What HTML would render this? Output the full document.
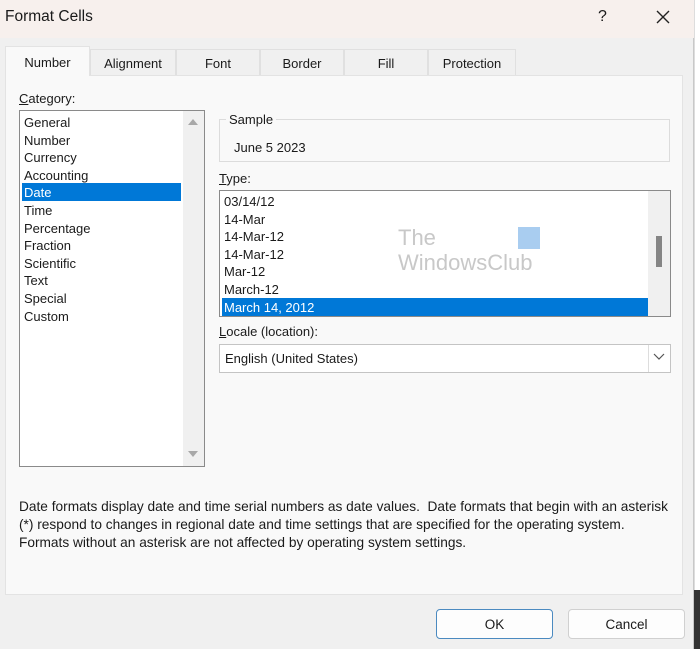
<!DOCTYPE html>
<html><head><style>
*{margin:0;padding:0;box-sizing:border-box}
body{width:700px;height:649px;overflow:hidden;background:#fff;font-family:"Liberation Sans",sans-serif;font-size:13px;color:#1a1a1a;position:relative}
.a{position:absolute}
.dlg{left:0;top:0;width:694px;height:649px;background:#f0f0f0;border-right:1px solid #c8c8c8}
.title{left:0;top:0;width:694px;height:38px;background:#f7f0ed}
.tab{top:49px;height:26px;background:#f0f0f0;border:1px solid #e0e0e0;border-bottom:none;text-align:center;line-height:27px;font-size:13px}
.panel{left:5px;top:75px;width:678px;height:520px;background:#f9f9f9;border:1px solid #e3e3e3}
.list{background:#fff;border:1px solid #8a8a8a}
.it{position:absolute;left:4px;height:17.6px;line-height:17.6px;font-size:13px}
.btn{top:609px;width:117px;height:30px;background:#fdfdfd;border:1px solid #d0d0d0;border-radius:4px;text-align:center;line-height:29px;font-size:13.5px}
</style></head><body>
<div class="a" style="left:694px;top:0;width:6px;height:649px;background:#fff;border-left:1px solid #ddd"></div>
<div class="a" style="left:694px;top:590px;width:6px;height:59px;background:#333"></div>
<div class="a dlg"></div>
<div class="a title"></div>
<div class="a" style="left:5px;top:8px;font-size:15.5px">Format Cells</div>
<div class="a" style="left:598px;top:8px;font-size:16px">?</div>
<svg class="a" style="left:656px;top:10px" width="14" height="14"><path d="M1 1L13 13M13 1L1 13" stroke="#222" stroke-width="1.4"/></svg>
<div class="a panel"></div>
<div class="a tab" style="left:5px;top:46px;width:85px;height:30px;background:#f9f9f9;border-color:#e3e3e3;line-height:31px">Number</div>
<div class="a tab" style="left:90px;width:86px">Alignment</div>
<div class="a tab" style="left:176px;width:84px">Font</div>
<div class="a tab" style="left:260px;width:84px">Border</div>
<div class="a tab" style="left:344px;width:84px">Fill</div>
<div class="a tab" style="left:428px;width:88px">Protection</div>
<div class="a" style="left:19px;top:91px"><u>C</u>ategory:</div>
<div class="a list" style="left:19px;top:110px;width:186px;height:357px">
<div class="it" style="top:3px">General</div>
<div class="it" style="top:20.6px">Number</div>
<div class="it" style="top:38.2px">Currency</div>
<div class="it" style="top:55.8px">Accounting</div>
<div class="a" style="left:2px;top:72px;width:159px;height:18px;background:#0078d7"></div>
<div class="it" style="top:73.4px;color:#fff">Date</div>
<div class="it" style="top:91px">Time</div>
<div class="it" style="top:108.6px">Percentage</div>
<div class="it" style="top:126.2px">Fraction</div>
<div class="it" style="top:143.8px">Scientific</div>
<div class="it" style="top:161.4px">Text</div>
<div class="it" style="top:179px">Special</div>
<div class="it" style="top:196.6px">Custom</div>
<div class="a" style="left:163px;top:0;width:21px;height:355px;background:#f0f0f0"></div>
<svg class="a" style="left:167px;top:6px" width="12" height="10"><path d="M1 8L6 2L11 8Z" fill="#a8a8a8"/></svg>
<svg class="a" style="left:167px;top:338px" width="12" height="10"><path d="M1 2L6 8L11 2Z" fill="#a8a8a8"/></svg>
</div>
<div class="a" style="left:219px;top:119px;width:451px;height:43px;border:1px solid #dcdcdc"></div>
<div class="a" style="left:226px;top:112px;background:#f9f9f9;padding:0 3px">Sample</div>
<div class="a" style="left:234px;top:140px">June 5 2023</div>
<div class="a" style="left:219px;top:171px"><u>T</u>ype:</div>
<div class="a list" style="left:219px;top:190px;width:452px;height:127px">
<div class="it" style="top:2px">03/14/12</div>
<div class="it" style="top:19.6px">14-Mar</div>
<div class="it" style="top:37.2px">14-Mar-12</div>
<div class="it" style="top:54.8px">14-Mar-12</div>
<div class="it" style="top:72.4px">Mar-12</div>
<div class="it" style="top:90px">March-12</div>
<div class="a" style="left:2px;top:107px;width:426px;height:18px;background:#0078d7"></div>
<div class="it" style="top:108px;color:#fff">March 14, 2012</div>
<div class="a" style="left:428px;top:0;width:22px;height:125px;background:#f0f0f0"></div>
<div class="a" style="left:436px;top:45px;width:6px;height:31px;background:#858585"></div>
<div class="a" style="left:178px;top:34px;color:#c8c8c8;font-size:22px;line-height:25px">The<br>WindowsClub</div>
<div class="a" style="left:298px;top:36px;width:22px;height:22px;background:#a9cdf0"></div>
</div>
<div class="a" style="left:219px;top:324px"><u>L</u>ocale (location):</div>
<div class="a" style="left:219px;top:344px;width:452px;height:29px;background:#fff;border:1px solid #c4c4c4"></div>
<div class="a" style="left:225px;top:351px">English (United States)</div>
<div class="a" style="left:648px;top:345px;width:22px;height:27px;border-left:1px solid #ddd"></div>
<svg class="a" style="left:653px;top:353px" width="12" height="8"><path d="M1 1L6 6L11 1" stroke="#555" fill="none" stroke-width="1.2"/></svg>
<div class="a" style="left:19px;top:498px;line-height:18px;font-size:13.7px;width:680px;white-space:nowrap">Date formats display date and time serial numbers as date values.&nbsp; Date formats that begin with an asterisk<br>(*) respond to changes in regional date and time settings that are specified for the operating system.<br>Formats without an asterisk are not affected by operating system settings.</div>
<div class="a btn" style="left:436px;border:1px solid #4b8ac0">OK</div>
<div class="a btn" style="left:568px">Cancel</div>
</body></html>
